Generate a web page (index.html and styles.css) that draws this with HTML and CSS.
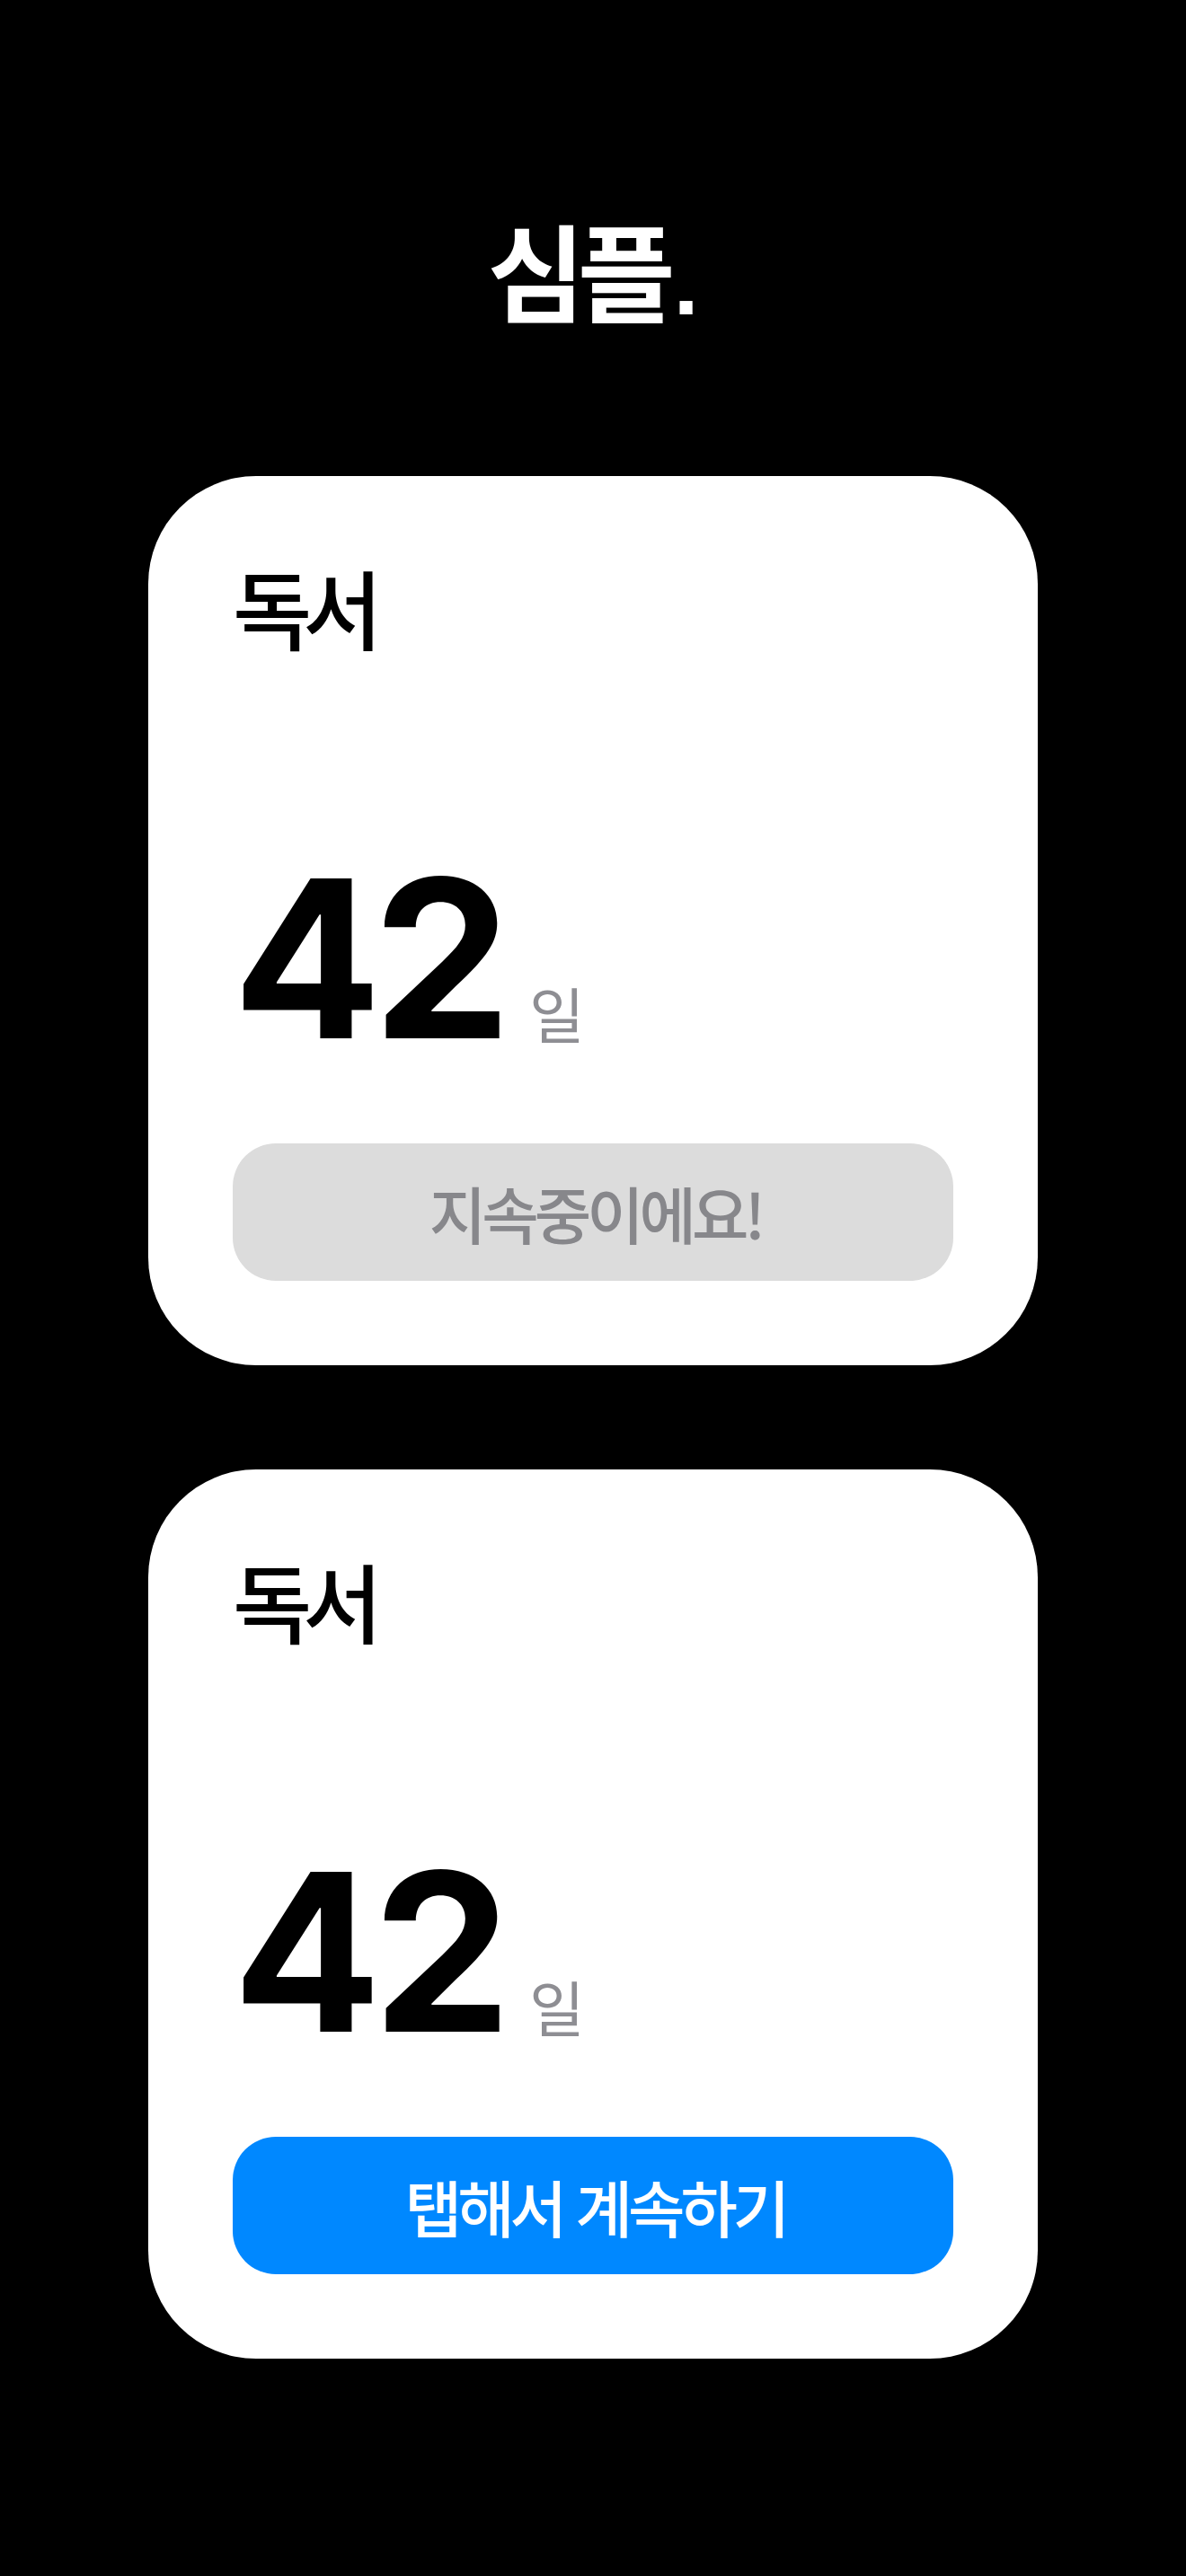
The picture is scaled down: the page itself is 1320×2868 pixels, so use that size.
FILE: index.html
```html
<!DOCTYPE html>
<html lang="ko">
<head>
<meta charset="utf-8">
<title>심플.</title>
<link rel="stylesheet" href="styles.css">
</head>
<body>
<main class="page">
  <h1 class="title">심플<span class="dot">.</span></h1>
  <section class="card">
    <div class="label">독서</div>
    <div class="spacer"></div>
    <div class="count"><span class="num">42</span><span class="unit">일</span></div>
    <div class="btn btn-done">지속중이에요!</div>
  </section>
  <section class="card">
    <div class="label">독서</div>
    <div class="spacer"></div>
    <div class="count"><span class="num">42</span><span class="unit">일</span></div>
    <div class="btn btn-go">탭해서 계속하기</div>
  </section>
</main>
</body>
</html>
```
FILE: styles.css
```css
html, body {
  margin: 0;
  padding: 0;
  background: #000;
}
body {
  font-family: "Noto Sans CJK KR", "Noto Sans", sans-serif;
}
.page {
  display: flex;
  flex-direction: column;
  align-items: center;
  padding-top: 240px;
  min-height: 2868px;
  box-sizing: border-box;
}
.title {
  margin: 0;
  color: #fff;
  font-size: 118px;
  font-weight: 700;
  line-height: 1;
  letter-spacing: -8px;
  height: 118px;
}
.dot {
  font-family: "Liberation Sans", sans-serif;
  font-size: 100px;
  letter-spacing: 0;
  margin-left: 6px;
}
.card {
  width: 990px;
  height: 990px;
  box-sizing: border-box;
  background: #fff;
  border-radius: 120px;
  padding: 94px;
  display: flex;
  flex-direction: column;
  margin-top: 172px;
}
.card + .card {
  margin-top: 116px;
}
.label {
  font-size: 96px;
  font-weight: 500;
  line-height: 1;
  color: #000;
  letter-spacing: -10px;
  padding-top: 3px;
}
.spacer {
  flex: 1;
}
.count {
  display: flex;
  align-items: baseline;
  margin-bottom: 83px;
}
.num {
  font-family: Inter, "Liberation Sans", sans-serif;
  font-weight: 700;
  font-size: 245px;
  line-height: 1;
  color: #000;
  letter-spacing: -10px;
}
.unit {
  font-size: 67px;
  line-height: 1;
  font-weight: 400;
  color: #8e8e93;
  margin-left: 30px;
}
.btn {
  height: 153px;
  border-radius: 48px;
  display: flex;
  align-items: center;
  justify-content: center;
  font-size: 69px;
  font-weight: 500;
  letter-spacing: -5px;
  padding-left: 5px;
  box-sizing: border-box;
}
.btn-done {
  background: #dcdcdc;
  color: #87878b;
}
.btn-go {
  background: #0088ff;
  color: #fff;
}
```
